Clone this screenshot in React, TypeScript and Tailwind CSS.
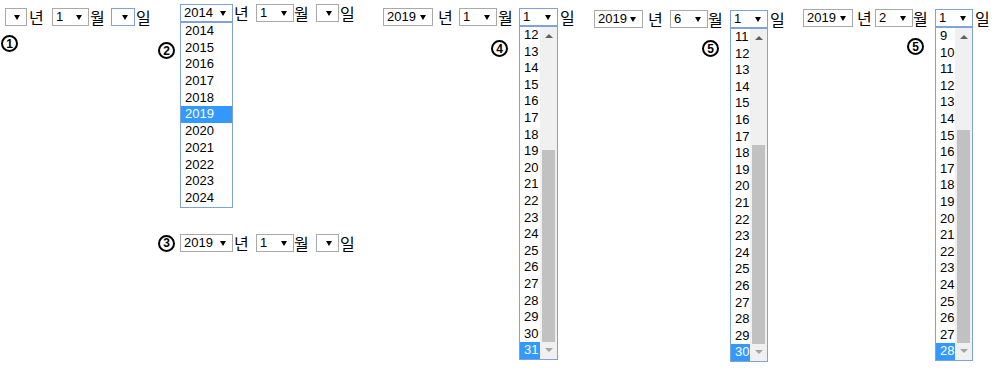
import React from "react";

type SelectProps = {
  value?: string;
  className: string;
  focus?: boolean;
  children?: React.ReactNode;
};

const Select = ({ value, className, focus, children }: SelectProps) => (
  <div
    className={`relative h-[18px] shrink-0 border bg-white ${
      focus ? "border-[#7fa2d8]" : "border-[#a9a9a9]"
    } ${className}`}
  >
    <span className="block pl-[3px] text-[13px] leading-[16px] text-black">{value}</span>
    <span className="absolute right-[6px] top-[6px] h-0 w-0 border-x-[3.5px] border-t-[5px] border-x-transparent border-t-black" />
    {children}
  </div>
);

const Label = ({ text, className }: { text: string; className: string }) => (
  <span
    className={`w-[16px] shrink-0 font-['Noto_Sans_CJK_KR',sans-serif] text-[16px] leading-[18px] ${className}`}
  >
    {text}
  </span>
);

const Circle = ({ n, className }: { n: string; className: string }) => (
  <div
    className={`flex h-[17px] w-[17px] shrink-0 items-center justify-center rounded-full border-2 border-black text-[12px] font-bold leading-none ${className}`}
  >
    {n}
  </div>
);

const range = (from: number, to: number) =>
  Array.from({ length: to - from + 1 }, (_, i) => from + i);

const YearList = () => (
  <div className="absolute left-[-1px] top-[calc(100%+1px)] z-10 w-[calc(100%+2px)] border border-[#7fa2d8] bg-white">
    {range(2014, 2024).map((y) => (
      <div
        key={y}
        className={`h-[16.7px] pl-[4px] text-[13px] leading-[16.7px] ${
          y === 2019 ? "bg-[#3399ff] text-white" : "text-black"
        }`}
      >
        {y}
      </div>
    ))}
  </div>
);

const DayList = ({ from, total }: { from: number; total: number }) => {
  const items = range(from, total);
  return (
    <div className="absolute left-[-1px] top-[calc(100%+1px)] z-10 flex w-[calc(100%+2px)] border border-[#7fa2d8] bg-white">
      <div className="flex-1">
        {items.map((d) => (
          <div
            key={d}
            className={`h-[16.6px] pl-[4px] text-[13px] leading-[16.6px] ${
              d === total ? "bg-[#3399ff] text-white" : "text-black"
            }`}
          >
            {d}
          </div>
        ))}
      </div>
      <div className="flex w-[17px] flex-col bg-[#f0f0f0]">
        <div className="flex h-[17px] items-center justify-center">
          <span className="h-0 w-0 border-x-[4px] border-b-[4px] border-x-transparent border-b-[#606060]" />
        </div>
        <div className="flex flex-1 flex-col">
          <div style={{ flexGrow: total - items.length }} />
          <div className="mx-[2px] bg-[#c1c1c1]" style={{ flexGrow: items.length }} />
        </div>
        <div className="flex h-[17px] items-center justify-center">
          <span className="h-0 w-0 border-x-[4px] border-t-[4px] border-x-transparent border-t-[#a3a3a3]" />
        </div>
      </div>
    </div>
  );
};

export default function App() {
  return (
    <div className="flex h-[372px] w-[1003px] overflow-hidden bg-white font-['Liberation_Sans',Arial,sans-serif] text-black">
      {/* 1 */}
      <div className="flex w-[158px] shrink-0 flex-col pt-[8px]">
        <div className="flex pl-[5px]">
          <Select className="w-[22px]" />
          <Label text="년" className="ml-[2px] mr-[7px]" />
          <Select value="1" className="w-[37px]" />
          <Label text="월" className="ml-[1px] mr-[5px]" />
          <Select className="w-[24px]" focus />
          <Label text="일" className="ml-[1px]" />
        </div>
        <Circle n="1" className="ml-[1px] mt-[9px]" />
      </div>

      {/* 2, 3 */}
      <div className="flex w-[225px] shrink-0 flex-col pt-[4px]">
        <div className="flex pl-[22px]">
          <Select value="2014" className="w-[53px]" focus>
            <YearList />
          </Select>
          <Label text="년" className="ml-[1px] mr-[6px]" />
          <Select value="1" className="w-[38px]" />
          <Label text="월" className="mr-[6px]" />
          <Select className="w-[23px]" />
          <Label text="일" className="ml-[1px]" />
        </div>
        <Circle n="2" className="mt-[20px]" />
        <div className="mt-[175px] flex items-center">
          <Circle n="3" className="mr-[5px]" />
          <Select value="2019" className="w-[53px]" />
          <Label text="년" className="ml-[1px] mr-[6px]" />
          <Select value="1" className="w-[38px]" />
          <Label text="월" className="mr-[6px]" />
          <Select className="w-[23px]" />
          <Label text="일" className="ml-[1px]" />
        </div>
      </div>

      {/* 4 */}
      <div className="flex w-[211px] shrink-0 flex-col pt-[8px]">
        <div className="flex">
          <Select value="2019" className="w-[50px]" />
          <Label text="년" className="ml-[5px] mr-[5px]" />
          <Select value="1" className="w-[38px]" />
          <Label text="월" className="ml-[1px] mr-[5px]" />
          <Select value="1" className="w-[39px]" focus>
            <DayList from={12} total={31} />
          </Select>
          <Label text="일" className="ml-[2px]" />
        </div>
        <Circle n="4" className="ml-[108px] mt-[14px]" />
      </div>

      {/* 5 */}
      <div className="flex w-[209px] shrink-0 flex-col pt-[10px]">
        <div className="flex">
          <Select value="2019" className="w-[49px]" />
          <Label text="년" className="ml-[5px] mr-[6px]" />
          <Select value="6" className="w-[38px]" />
          <Label text="월" className="mr-[6px]" />
          <Select value="1" className="w-[38px]" focus>
            <DayList from={11} total={30} />
          </Select>
          <Label text="일" className="ml-[2px]" />
        </div>
        <Circle n="5" className="ml-[108px] mt-[12px]" />
      </div>

      {/* 5 (Feb) */}
      <div className="flex flex-1 flex-col pt-[9px]">
        <div className="flex">
          <Select value="2019" className="w-[50px]" />
          <Label text="년" className="ml-[4px] mr-[2px]" />
          <Select value="2" className="w-[38px]" />
          <Label text="월" className="mr-[6px]" />
          <Select value="1" className="w-[38px]" focus>
            <DayList from={9} total={28} />
          </Select>
          <Label text="일" className="ml-[2px]" />
        </div>
        <Circle n="5" className="ml-[104px] mt-[11px]" />
      </div>
    </div>
  );
}
